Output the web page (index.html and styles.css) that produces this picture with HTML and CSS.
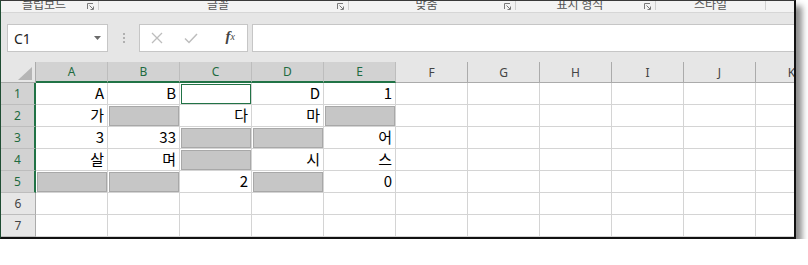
FILE: index.html
```html
<!DOCTYPE html>
<html>
<head>
  <meta charset="utf-8">
  <title>시트 선택</title>
  <link rel="stylesheet" href="styles.css">
</head>
<body>
  <div class="window">
    <!-- 리본 그룹 이름 (위쪽이 잘린 상태) -->
    <div class="ribbon">
      <div class="group g-clip"><span class="label">클립보드</span><span class="launcher"><svg width="7" height="7" viewBox="0 0 7 7"><path d="M0.5 6V0.5H6" fill="none" stroke="#7a7a7a"/><path d="M2.5 2.5L6 6M3.5 6.5h3v-3" fill="none" stroke="#7a7a7a"/></svg></span></div>
      <div class="sep"></div>
      <div class="group g-font"><span class="label">글꼴</span><span class="launcher"><svg width="7" height="7" viewBox="0 0 7 7"><path d="M0.5 6V0.5H6" fill="none" stroke="#7a7a7a"/><path d="M2.5 2.5L6 6M3.5 6.5h3v-3" fill="none" stroke="#7a7a7a"/></svg></span></div>
      <div class="sep"></div>
      <div class="group g-align"><span class="label">맞춤</span><span class="launcher"><svg width="7" height="7" viewBox="0 0 7 7"><path d="M0.5 6V0.5H6" fill="none" stroke="#7a7a7a"/><path d="M2.5 2.5L6 6M3.5 6.5h3v-3" fill="none" stroke="#7a7a7a"/></svg></span></div>
      <div class="sep"></div>
      <div class="group g-num"><span class="label">표시 형식</span><span class="launcher"><svg width="7" height="7" viewBox="0 0 7 7"><path d="M0.5 6V0.5H6" fill="none" stroke="#7a7a7a"/><path d="M2.5 2.5L6 6M3.5 6.5h3v-3" fill="none" stroke="#7a7a7a"/></svg></span></div>
      <div class="sep"></div>
      <div class="group g-style"><span class="label">스타일</span></div>
      <div class="sep"></div>
    </div>

    <!-- 이름 상자 + 수식 입력줄 -->
    <div class="formula-bar">
      <div class="name-box">
        <span>C1</span>
        <svg width="7" height="4" viewBox="0 0 7 4"><path d="M0 0h7L3.5 4z" fill="#6b6b6b"/></svg>
      </div>
      <div class="grip">
        <svg width="2" height="10" viewBox="0 0 2 10"><rect y="0" width="2" height="2" fill="#b0b0b0"/><rect y="4" width="2" height="2" fill="#b0b0b0"/><rect y="8" width="2" height="2" fill="#b0b0b0"/></svg>
      </div>
      <div class="fx-buttons">
        <span class="btn"><svg width="12" height="12" viewBox="0 0 12 12"><path d="M1 1L11 11M11 1L1 11" stroke="#bdbdbd" stroke-width="1.3"/></svg></span>
        <span class="btn"><svg width="14" height="11" viewBox="0 0 14 11"><path d="M1 5.5L5 9.5L13 1" fill="none" stroke="#bdbdbd" stroke-width="1.5"/></svg></span>
        <span class="btn fx"><i>f</i><sub>x</sub></span>
      </div>
      <div class="formula-input"></div>
    </div>

    <!-- 워크시트 -->
    <div class="sheet">
      <div class="corner"><svg width="14" height="13" viewBox="0 0 14 13"><path d="M14 0V13H0z" fill="#b5b5b5"/></svg></div>
      <div class="col-h sel">A</div>
      <div class="col-h sel">B</div>
      <div class="col-h sel">C</div>
      <div class="col-h sel">D</div>
      <div class="col-h sel">E</div>
      <div class="col-h">F</div>
      <div class="col-h">G</div>
      <div class="col-h">H</div>
      <div class="col-h">I</div>
      <div class="col-h">J</div>
      <div class="col-h">K</div>

      <div class="row-h sel">1</div>
      <div class="c">A</div>
      <div class="c">B</div>
      <div class="c active"><span class="cursor"></span></div>
      <div class="c">D</div>
      <div class="c">1</div>
      <div class="c"></div><div class="c"></div><div class="c"></div><div class="c"></div><div class="c"></div><div class="c"></div>

      <div class="row-h sel">2</div>
      <div class="c">가</div>
      <div class="c gray"><span class="fill"></span></div>
      <div class="c">다</div>
      <div class="c">마</div>
      <div class="c gray"><span class="fill"></span></div>
      <div class="c"></div><div class="c"></div><div class="c"></div><div class="c"></div><div class="c"></div><div class="c"></div>

      <div class="row-h sel">3</div>
      <div class="c">3</div>
      <div class="c">33</div>
      <div class="c gray"><span class="fill"></span></div>
      <div class="c gray"><span class="fill"></span></div>
      <div class="c">어</div>
      <div class="c"></div><div class="c"></div><div class="c"></div><div class="c"></div><div class="c"></div><div class="c"></div>

      <div class="row-h sel">4</div>
      <div class="c">살</div>
      <div class="c">며</div>
      <div class="c gray"><span class="fill"></span></div>
      <div class="c">시</div>
      <div class="c">스</div>
      <div class="c"></div><div class="c"></div><div class="c"></div><div class="c"></div><div class="c"></div><div class="c"></div>

      <div class="row-h sel">5</div>
      <div class="c gray"><span class="fill"></span></div>
      <div class="c gray"><span class="fill"></span></div>
      <div class="c">2</div>
      <div class="c gray"><span class="fill"></span></div>
      <div class="c">0</div>
      <div class="c"></div><div class="c"></div><div class="c"></div><div class="c"></div><div class="c"></div><div class="c"></div>

      <div class="row-h">6</div>
      <div class="c"></div><div class="c"></div><div class="c"></div><div class="c"></div><div class="c"></div>
      <div class="c"></div><div class="c"></div><div class="c"></div><div class="c"></div><div class="c"></div><div class="c"></div>

      <div class="row-h">7</div>
      <div class="c"></div><div class="c"></div><div class="c"></div><div class="c"></div><div class="c"></div>
      <div class="c"></div><div class="c"></div><div class="c"></div><div class="c"></div><div class="c"></div><div class="c"></div>
    </div>
  </div>
</body>
</html>
```

FILE: styles.css
```css
body {
  margin: 0;
  background-color: #fff;
}

.window {
  width: 796px;
  box-sizing: border-box;
  border-top: 1px solid #3a3a3a;
  border-left: 1px solid #1f4d33;
  border-right: 2px solid #111;
  border-bottom: 2px solid #111;
  box-shadow: 6px 6px 6px rgba(0, 0, 0, 0.45);
  overflow: hidden;
  background-color: #fff;
}

/* 리본 */
.ribbon {
  display: flex;
  height: 11px;
  background-color: #f3f3f3;
  border-bottom: 1px solid #d6d6d6;
  overflow: hidden;
}

.group {
  display: flex;
  height: 11px;
}

.g-clip { width: 97px; }
.g-font { width: 249px; }
.g-align { width: 166px; }
.g-num { width: 139px; }
.g-style { width: 109px; }

.label {
  flex: 1;
  text-align: center;
  font-family: "Noto Sans CJK KR", sans-serif;
  font-size: 12px;
  line-height: 12px;
  margin-top: -3px;
  color: #555;
  white-space: nowrap;
}

.launcher {
  display: flex;
  align-items: flex-start;
  width: 8px;
  margin-right: 3px;
  padding-top: 2px;
}

.sep {
  width: 1px;
  height: 9px;
  background-color: #d0d0d0;
}

/* 수식 입력줄 */
.formula-bar {
  display: flex;
  height: 49px;
  box-sizing: border-box;
  padding-top: 11px;
  padding-bottom: 10px;
  background-color: #e6e6e6;
}

.name-box {
  display: flex;
  align-items: center;
  justify-content: space-between;
  width: 101px;
  margin-left: 6px;
  box-sizing: border-box;
  padding: 0 6px 0 6px;
  background-color: #fff;
  border: 1px solid #c6c6c6;
  font-family: "Noto Sans", sans-serif;
  font-size: 14px;
  color: #222;
}

.grip {
  width: 31px;
  display: flex;
  align-items: center;
  justify-content: center;
  padding-left: 1px;
  box-sizing: border-box;
}

.fx-buttons {
  display: flex;
  width: 109px;
  box-sizing: border-box;
  background-color: #fff;
  border: 1px solid #c6c6c6;
}

.btn {
  flex: 1;
  display: flex;
  align-items: center;
  justify-content: center;
}

.fx {
  font-family: "Liberation Serif", serif;
  font-size: 15px;
  color: #444;
  padding-bottom: 3px;
  padding-left: 6px;
}

.fx i {
  font-weight: bold;
}

.fx sub {
  font-style: italic;
  font-size: 10px;
  vertical-align: -1px;
}

.formula-input {
  flex: 1;
  margin-left: 4px;
  background-color: #fff;
  border: 1px solid #c6c6c6;
  border-right: none;
}

/* 시트 */
.sheet {
  display: grid;
  grid-template-columns: 35px repeat(11, 72px);
  grid-template-rows: 21px repeat(7, 22px);
  font-family: "Noto Sans", sans-serif;
}

.corner {
  display: flex;
  align-items: flex-end;
  justify-content: flex-end;
  padding: 0 3px 2px 0;
  background-color: #e6e6e6;
  border-right: 1px solid #ababab;
  border-bottom: 1px solid #ababab;
}

.corner,
.col-h,
.row-h,
.c {
  box-sizing: border-box;
}

.col-h {
  display: flex;
  align-items: center;
  justify-content: center;
  font-size: 12px;
  color: #444;
  background-color: #e6e6e6;
  border-right: 1px solid #ababab;
  border-bottom: 1px solid #ababab;
}

.col-h.sel {
  background-color: #d2d2d2;
  color: #1e6b40;
  border-right-color: #bdbdbd;
  border-bottom: 2px solid #217346;
}

.row-h {
  display: flex;
  align-items: center;
  justify-content: center;
  font-size: 12px;
  color: #444;
  background-color: #e6e6e6;
  border-right: 1px solid #ababab;
  border-bottom: 1px solid #bdbdbd;
}

.row-h.sel {
  background-color: #d2d2d2;
  color: #1e6b40;
  border-right: 2px solid #217346;
}

.c {
  display: flex;
  justify-content: flex-end;
  align-items: flex-end;
  padding: 0 3px 2px 0;
  border-right: 1px solid #d4d4d4;
  border-bottom: 1px solid #d4d4d4;
  font-family: "Noto Sans CJK KR", sans-serif;
  font-size: 15px;
  line-height: 18px;
  color: #000;
}

.c.gray,
.c.active {
  padding: 1px 0 0 1px;
}

.fill {
  flex: 1;
  align-self: stretch;
  background-color: #c6c6c6;
  border: 1px solid #a8a8a8;
}

.cursor {
  flex: 1;
  align-self: stretch;
  border: 1px solid #217346;
}
```
